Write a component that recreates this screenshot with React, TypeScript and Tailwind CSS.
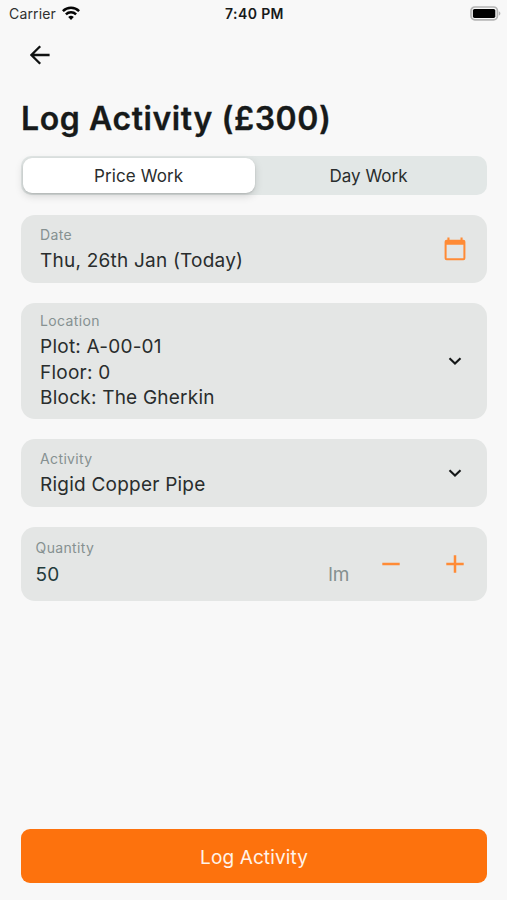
import type { ReactNode } from "react";

function BackArrow() {
  return (
    <svg width="20" height="20" viewBox="0 0 20 20" fill="none" stroke="#101212" strokeWidth="2.3" className="block">
      <path d="M19.6 10H2M10.2 1.2L1.4 10l8.8 8.8" />
    </svg>
  );
}

function WifiIcon() {
  return (
    <svg width="18" height="14" viewBox="0 0 18 14" fill="none" stroke="#050505" strokeWidth="2.5" className="block -translate-y-px">
      <path d="M0.9 5.1a11.6 11.6 0 0 1 16.2 0" />
      <path d="M3.9 8.3a7.3 7.3 0 0 1 10.2 0" />
      <path d="M9 13.9L6.2 11a4 4 0 0 1 5.6 0Z" fill="#050505" stroke="none" />
    </svg>
  );
}

function BatteryIcon() {
  return (
    <svg width="31" height="15" viewBox="0 0 31 15" className="block -translate-y-px">
      <rect x="1" y="1" width="26.4" height="12.8" rx="3.8" fill="none" stroke="#b4b4b4" strokeWidth="1.7" />
      <rect x="2.9" y="2.9" width="22.4" height="9" rx="1.6" fill="#000" />
      <path d="M28.8 5.2c2.1.8 2.1 3.6 0 4.4Z" fill="#b4b4b4" />
    </svg>
  );
}

function CalendarIcon() {
  return (
    <svg width="22" height="24" viewBox="0 0 22 24" className="block" fill="#ff8b36">
      <path
        fillRule="evenodd"
        d="M3.4 0.6h2.1v2.1h11V0.6h2.1v2.1H19.4a2 2 0 0 1 2 2v16.6a2 2 0 0 1-2 2H2.6a2 2 0 0 1-2-2V4.7a2 2 0 0 1 2-2h0.8ZM2.6 7.8v13.4h16.8V7.8Z"
      />
    </svg>
  );
}

function Chevron() {
  return (
    <svg width="14" height="8" viewBox="0 0 14 8" fill="none" stroke="#151818" strokeWidth="2.1" className="block">
      <path d="M1.5 1.2L7 6.5l5.5-5.3" />
    </svg>
  );
}

function Field({ label, lines, icon, className }: { label: string; lines: string[]; icon: ReactNode; className: string }) {
  return (
    <section className={`flex items-center justify-between rounded-[14px] bg-[#e4e6e5] pl-[19.5px] ${className}`}>
      <div>
        <div className="text-[14px] leading-[18px] tracking-[0.35px] text-[#869191]">{label}</div>
        <div className="mt-[3px] text-[19px] leading-[25.6px] tracking-[0.22px] text-[#292d2d]">
          {lines.map((line) => (
            <div key={line} className="translate-y-[0.5px]">{line}</div>
          ))}
        </div>
      </div>
      <div className="flex w-[65px] justify-center">{icon}</div>
    </section>
  );
}

export default function App() {
  return (
    <main className="flex h-[900px] w-[507px] flex-col bg-[#f8f8f8] font-['Inter',sans-serif] text-[#171a1a]">
      <header className="grid h-[28px] shrink-0 grid-cols-3 items-center pl-[8px] pr-[6px]">
        <div className="flex items-center gap-[6px] pl-px">
          <span className="text-[14px] leading-5 tracking-[0.15px] text-[#303030]">Carrier</span>
          <WifiIcon />
        </div>
        <span className="text-center text-[14px] font-semibold leading-5 tracking-[0.4px]">7:40 PM</span>
        <div className="flex justify-end">
          <BatteryIcon />
        </div>
      </header>
      <div className="flex h-[54px] shrink-0 items-center pl-[30px]">
        <button aria-label="Back"><BackArrow /></button>
      </div>
      <div className="flex grow flex-col pb-[17px] pl-[20.6px] pr-[19.6px]">
        <h1 className="mt-[17px] h-[57px] whitespace-nowrap pl-[0.5px] text-[32px] font-semibold leading-[40px] tracking-[0.58px] [-webkit-text-stroke:0.3px_#171a1a]">Log Activity (£300)</h1>
        <div className="flex h-[39px] shrink-0 rounded-[10px] bg-[#e2e7e6] p-[2px] text-[17px] text-[#292d2d]">
          <button className="w-[232px] rounded-[9px] bg-white pt-[2px] tracking-[0.1px] shadow-[0_3px_8px_rgba(0,0,0,0.15),0_1px_2px_rgba(0,0,0,0.12)]">Price Work</button>
          <button className="grow pr-[3px] pt-[2px] tracking-[0.02px]">Day Work</button>
        </div>
        <div className="mt-5 flex flex-col gap-5">
          <Field label="Date" lines={["Thu, 26th Jan (Today)"]} icon={<CalendarIcon />} className="h-[68px]" />
          <Field label="Location" lines={["Plot: A-00-01", "Floor: 0", "Block: The Gherkin"]} icon={<Chevron />} className="h-[116px]" />
          <Field label="Activity" lines={["Rigid Copper Pipe"]} icon={<Chevron />} className="h-[68px]" />
          <section className="flex h-[74px] rounded-[14px] bg-[#e4e6e5] pl-[15px]">
            <div className="grow pt-[12px]">
              <div className="text-[14px] leading-[18px] tracking-[0.35px] text-[#869191]">Quantity</div>
              <div className="mt-[5px] flex justify-between text-[19px] leading-[26px]">
                <span className="text-[#233b3b]">50</span>
                <span className="text-[#849090]">lm</span>
              </div>
            </div>
            <div className="ml-[10px] flex h-[74px] w-[128px] text-[#ff8b36]">
              <button aria-label="Decrease quantity" className="flex w-16 justify-center pt-[28px]">
                <svg width="18" height="18" viewBox="0 0 18 18" fill="none" stroke="currentColor" strokeWidth="2.5"><path d="M0.3 9h17.4" /></svg>
              </button>
              <button aria-label="Increase quantity" className="flex w-16 justify-center pt-[28px]">
                <svg width="18" height="18" viewBox="0 0 18 18" fill="none" stroke="currentColor" strokeWidth="2.5"><path d="M0.3 9h17.4M9 0.3v17.4" /></svg>
              </button>
            </div>
          </section>
        </div>
        <button className="mt-auto h-[54px] shrink-0 rounded-[9px] bg-[#fd720d] pt-[5px] text-[19px] tracking-[0.12px] text-[#fff3e9]">Log Activity</button>
      </div>
    </main>
  );
}
